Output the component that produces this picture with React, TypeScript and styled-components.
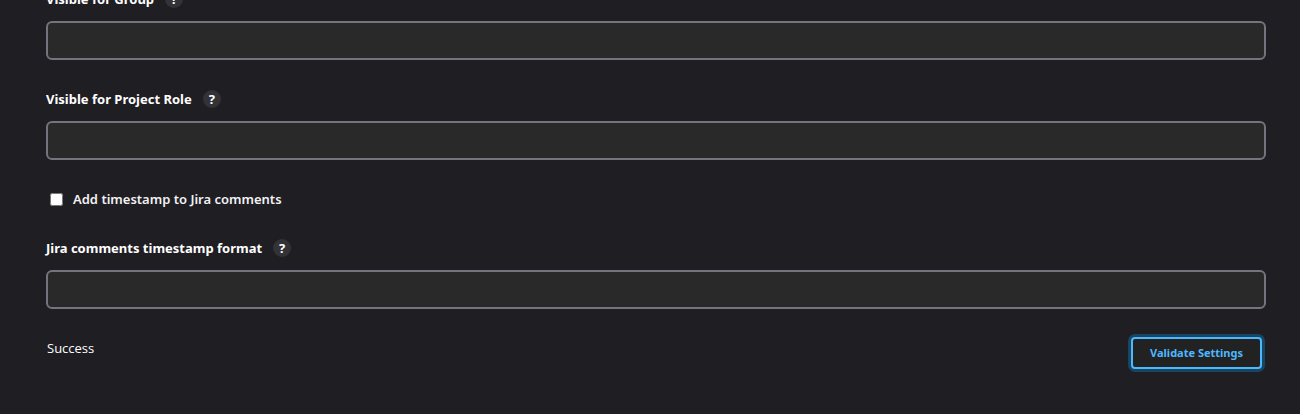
import React from "react";
import styled, { createGlobalStyle } from "styled-components";

const GlobalStyle = createGlobalStyle`
  *, *::before, *::after { box-sizing: border-box; }
  html, body { height: 100%; }
  body {
    margin: 0;
    overflow: hidden;
    background: #1f1e23;
    color: #ffffff;
    font-family: "Segoe UI", "Noto Sans", "Open Sans", sans-serif;
    font-size: 13px;
    line-height: 18px;
  }
`;

/* The form is shown scrolled, so its first label is cut by the top edge. */
const Form = styled.form`
  display: flex;
  flex-direction: column;
  gap: 30px;
  margin-top: -10px;
  padding: 0 34px 44px 46px;
`;

const Field = styled.div`
  display: flex;
  flex-direction: column;
  gap: 13px;
`;

const LabelRow = styled.div`
  display: flex;
  align-items: center;
  gap: 11px;
`;

const Label = styled.label`
  font-weight: 700;
`;

const HelpButton = styled.button`
  width: 18px;
  height: 18px;
  padding: 0;
  border: 0;
  border-radius: 50%;
  background: #333337;
  color: #ffffff;
  font: inherit;
  font-weight: 700;
`;

const TextInput = styled.input`
  width: 100%;
  height: 39px;
  padding: 0 12px;
  border: 2px solid #75737e;
  border-radius: 6px;
  background: #29292a;
  color: inherit;
  font: inherit;
`;

const CheckRow = styled.label`
  display: flex;
  align-items: center;
  gap: 10px;
  padding: 0 0 1px 4px;
  color: #f2f2f4;
  font-weight: 600;
`;

const Checkbox = styled.input`
  width: 13px;
  height: 13px;
  margin: 0;
`;

const Footer = styled.div`
  display: flex;
  justify-content: space-between;
  align-items: flex-start;
  margin-top: -2px;
  padding-right: 4px;
`;

const Status = styled.output`
  padding: 2px 0 0 1px;
  font-family: "Segoe UI", "Open Sans", sans-serif;
`;

const ValidateButton = styled.button`
  height: 32px;
  padding: 0 17px;
  border: 2px solid #4db8ff;
  border-radius: 4px;
  background: #222223;
  box-shadow: 0 0 0 3px #184562;
  color: #4db8ff;
  font: inherit;
  font-size: 11px;
  font-weight: 700;
`;

type SettingFieldProps = { id: string; label: string };

function SettingField({ id, label }: SettingFieldProps) {
  return (
    <Field>
      <LabelRow>
        <Label htmlFor={id}>{label}</Label>
        <HelpButton type="button">?</HelpButton>
      </LabelRow>
      <TextInput id={id} type="text" />
    </Field>
  );
}

export default function App() {
  return (
    <>
      <GlobalStyle />
      <Form>
        <SettingField id="group" label="Visible for Group" />
        <SettingField id="role" label="Visible for Project Role" />
        <CheckRow htmlFor="timestamp">
          <Checkbox id="timestamp" type="checkbox" />
          Add timestamp to Jira comments
        </CheckRow>
        <SettingField id="format" label="Jira comments timestamp format" />
        <Footer>
          <Status>Success</Status>
          <ValidateButton type="button">Validate Settings</ValidateButton>
        </Footer>
      </Form>
    </>
  );
}
